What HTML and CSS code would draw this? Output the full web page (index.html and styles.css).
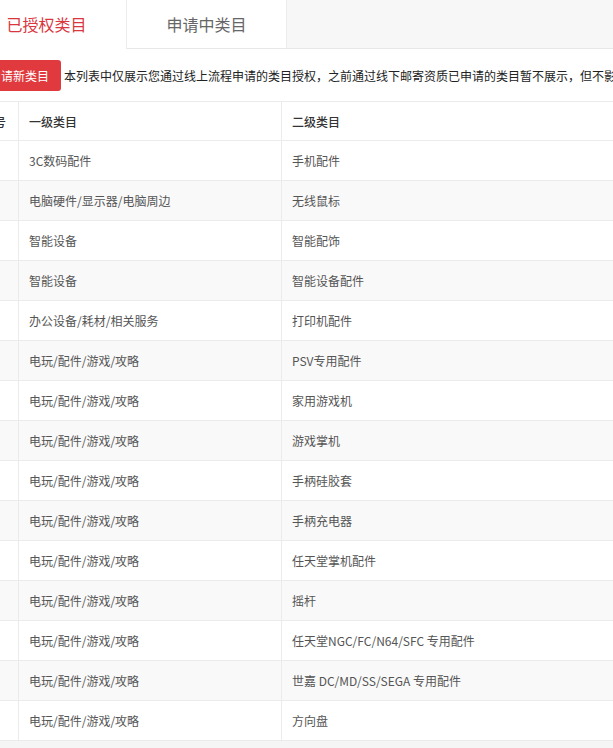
FILE: index.html
```html
<!DOCTYPE html>
<html lang="zh-CN">
<head>
<meta charset="utf-8">
<title>类目授权</title>
<link rel="stylesheet" href="styles.css">
</head>
<body>
<div class="page">
  <div class="tabs">
    <div class="tab active">已授权类目</div>
    <div class="tab">申请中类目</div>
  </div>
  <div class="panel">
    <div class="toolbar">
      <button class="btn">申请新类目</button>
      <span class="notice">本列表中仅展示您通过线上流程申请的类目授权，之前通过线下邮寄资质已申请的类目暂不展示，但不影响您发布商品</span>
    </div>
    <table class="grid">
      <colgroup>
        <col class="c0"><col class="c1"><col class="c2">
      </colgroup>
      <thead>
        <tr><th>序号</th><th>一级类目</th><th>二级类目</th></tr>
      </thead>
      <tbody>
        <tr><td>1</td><td>3C数码配件</td><td>手机配件</td></tr>
        <tr><td>2</td><td>电脑硬件/显示器/电脑周边</td><td>无线鼠标</td></tr>
        <tr><td>3</td><td>智能设备</td><td>智能配饰</td></tr>
        <tr><td>4</td><td>智能设备</td><td>智能设备配件</td></tr>
        <tr><td>5</td><td>办公设备/耗材/相关服务</td><td>打印机配件</td></tr>
        <tr><td>6</td><td>电玩/配件/游戏/攻略</td><td>PSV专用配件</td></tr>
        <tr><td>7</td><td>电玩/配件/游戏/攻略</td><td>家用游戏机</td></tr>
        <tr><td>8</td><td>电玩/配件/游戏/攻略</td><td>游戏掌机</td></tr>
        <tr><td>9</td><td>电玩/配件/游戏/攻略</td><td>手柄硅胶套</td></tr>
        <tr><td>10</td><td>电玩/配件/游戏/攻略</td><td>手柄充电器</td></tr>
        <tr><td>11</td><td>电玩/配件/游戏/攻略</td><td>任天堂掌机配件</td></tr>
        <tr><td>12</td><td>电玩/配件/游戏/攻略</td><td>摇杆</td></tr>
        <tr><td>13</td><td>电玩/配件/游戏/攻略</td><td>任天堂NGC/FC/N64/SFC 专用配件</td></tr>
        <tr><td>14</td><td>电玩/配件/游戏/攻略</td><td>世嘉 DC/MD/SS/SEGA 专用配件</td></tr>
        <tr><td>15</td><td>电玩/配件/游戏/攻略</td><td>方向盘</td></tr>
      </tbody>
    </table>
  </div>
</div>
</body>
</html>
```

FILE: styles.css
```css
html, body {
  margin: 0;
  padding: 0;
}
body {
  background: #f5f5f5;
  font-family: "Microsoft YaHei", "Noto Sans CJK SC", sans-serif;
  overflow: hidden;
  width: 613px;
  height: 748px;
}
.page {
  margin-left: -33px;
  width: 960px;
}
.tabs {
  display: flex;
  height: 48px;
  background: #f7f7f7;
  border-bottom: 1px solid #e8e8e8;
}
.tab {
  width: 159px;
  height: 48px;
  line-height: 48px;
  text-align: center;
  font-size: 16px;
  color: #666;
  background: #fff;
  border-right: 1px solid #ececec;
}
.tab.active {
  color: #d9363e;
  height: 49px;
  margin-bottom: -1px;
  position: relative;
}
.panel {
  background: #fff;
  padding-top: 11px;
}
.toolbar {
  display: flex;
  align-items: center;
  gap: 3px;
  padding-left: 11px;
  white-space: nowrap;
}
.btn {
  height: 31px;
  padding: 0 12px 0 11px;
  border: none;
  border-radius: 3px;
  background: #e03a3e;
  color: #fff;
  font-family: inherit;
  font-size: 12px;
}
.notice {
  font-size: 12px;
  color: #222;
}
.grid {
  margin-top: 10px;
  margin-left: 4px;
  border-collapse: collapse;
  table-layout: fixed;
  width: 940px;
  font-size: 12px;
}
.c0 { width: 47px; }
.c1 { width: 263px; }
.grid th, .grid td {
  height: 39px;
  padding: 0 10px;
  text-align: left;
  border: 1px solid #ebebeb;
  white-space: nowrap;
}
.grid th {
  height: 38px;
  font-weight: 500;
  color: #333;
}
.grid td {
  color: #555;
}
.grid tbody tr:nth-child(even) td {
  background: #f9f9f9;
}
```
